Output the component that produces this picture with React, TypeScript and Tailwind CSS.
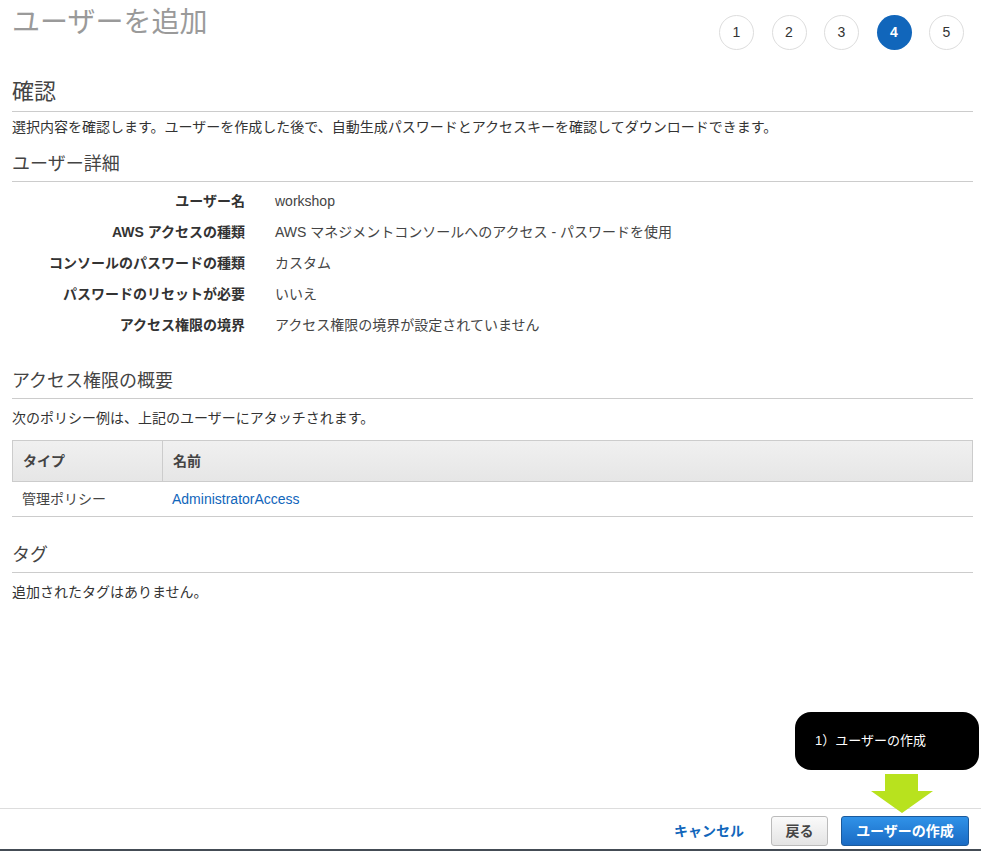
import React from 'react';

const font = { fontFamily: '"Liberation Sans", "Noto Sans CJK JP", sans-serif' };

const details: [string, string][] = [
  ['ユーザー名', 'workshop'],
  ['AWS アクセスの種類', 'AWS マネジメントコンソールへのアクセス - パスワードを使用'],
  ['コンソールのパスワードの種類', 'カスタム'],
  ['パスワードのリセットが必要', 'いいえ'],
  ['アクセス権限の境界', 'アクセス権限の境界が設定されていません'],
];

const SectionTitle = ({ children, className }: { children: React.ReactNode; className?: string }) => (
  <div className={`text-[18px] leading-[26px] text-[#444] pb-[4px] border-b border-[#ccc] ${className ?? ''}`}>
    {children}
  </div>
);

const Steps = () => (
  <div className="flex gap-[17.5px] pt-[15px] pr-[9px]">
    {[1, 2, 3, 4, 5].map((n) => (
      <div
        key={n}
        className={
          n === 4
            ? 'w-[35px] h-[35px] rounded-full bg-[#1166bb] text-white font-bold text-[14px] flex items-center justify-center'
            : 'w-[35px] h-[35px] rounded-full border border-[#ddd] text-[#333] text-[14px] flex items-center justify-center'
        }
      >
        {n}
      </div>
    ))}
  </div>
);

export default function App() {
  return (
    <div className="relative h-[851px] w-[981px] flex flex-col bg-white overflow-hidden" style={font}>
      <div className="flex-1 px-[12px] pr-[8px]">
        <div className="flex justify-between h-[56px]">
          <div className="text-[28px] leading-[38px] pt-[4px] text-[#9a9a9a]">ユーザーを追加</div>
          <Steps />
        </div>

        <div className="mt-[21px] text-[22px] leading-[30px] text-[#444] pb-[4px] border-b border-[#ccc]">確認</div>
        <div className="mt-[5px] text-[14px] leading-[20px] text-[#333]">
          選択内容を確認します。ユーザーを作成した後で、自動生成パスワードとアクセスキーを確認してダウンロードできます。
        </div>

        <SectionTitle className="mt-[14px]">ユーザー詳細</SectionTitle>
        <div className="mt-[4px]">
          {details.map(([k, v]) => (
            <div key={k} className="flex h-[31px] items-center text-[14px]">
              <div className="w-[233px] text-right font-bold text-[#333]">{k}</div>
              <div className="ml-[30px] text-[#444]">{v}</div>
            </div>
          ))}
        </div>

        <SectionTitle className="mt-[27px]">アクセス権限の概要</SectionTitle>
        <div className="mt-[9px] text-[14px] leading-[20px] text-[#333]">次のポリシー例は、上記のユーザーにアタッチされます。</div>

        <div className="mt-[12px] text-[14px]">
          <div className="flex h-[42px] border border-[#ccc] bg-gradient-to-b from-[#f0f0f0] to-[#e6e6e6] font-bold text-[#444]">
            <div className="w-[150px] px-[10px] flex items-center border-r border-[#ccc]">タイプ</div>
            <div className="px-[10px] flex items-center">名前</div>
          </div>
          <div className="flex h-[35px] border-b border-[#ccc] text-[#444]">
            <div className="w-[151px] px-[10px] flex items-center">管理ポリシー</div>
            <div className="px-[9px] flex items-center text-[#1166bb]">AdministratorAccess</div>
          </div>
        </div>

        <SectionTitle className="mt-[25px]">タグ</SectionTitle>
        <div className="mt-[9px] text-[14px] leading-[20px] text-[#333]">追加されたタグはありません。</div>
      </div>

      <div className="h-[43px] border-t border-[#ddd] border-b-2 border-b-[#444c55] flex justify-end items-start pt-[7px] pr-[12px]">
        <button className="h-[30px] px-[10px] mr-[17px] text-[14px] font-bold text-[#1166bb]">キャンセル</button>
        <button className="h-[30px] w-[57px] mr-[13px] rounded-[3px] border border-[#bbb] bg-gradient-to-b from-[#fafafa] to-[#e4e4e4] text-[14px] font-bold text-[#444]">
          戻る
        </button>
        <button className="h-[30px] w-[128px] rounded-[3px] border border-[#1b5a9c] bg-gradient-to-b from-[#3092e8] to-[#1a6bc4] text-[14px] font-bold text-white">
          ユーザーの作成
        </button>
      </div>

      <div className="absolute left-[795px] top-[712px] w-[184px] h-[58px] rounded-[16px] bg-black text-white text-[13px] flex items-center pl-[20px]">
        1）ユーザーの作成
      </div>
      <svg className="absolute left-[870px] top-[773px]" width="64" height="41" viewBox="0 0 64 41">
        <polygon points="15,1 48,1 48,18 63,18 32,40 1,18 15,18" fill="#b8e21e" />
      </svg>
    </div>
  );
}
